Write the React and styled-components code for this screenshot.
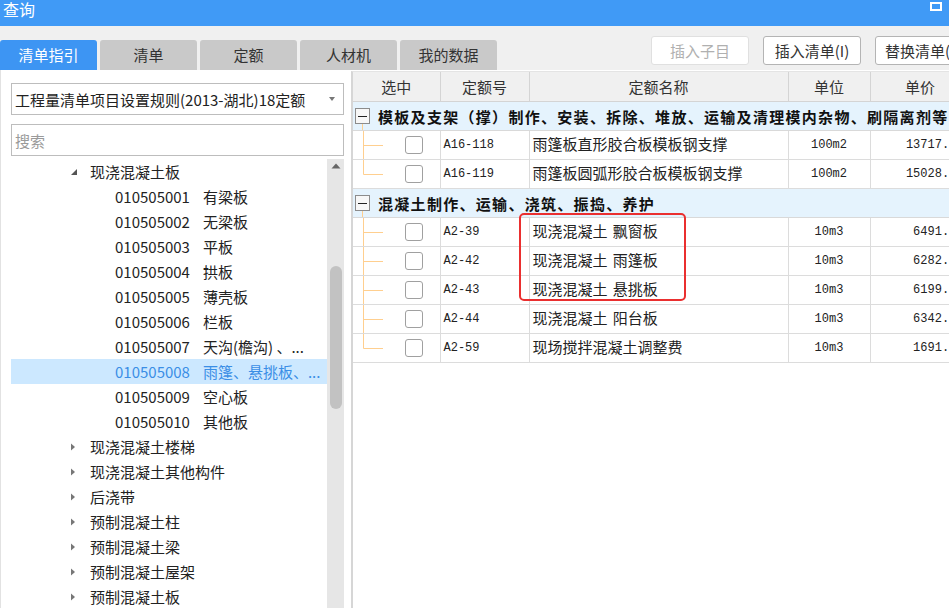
import React from "react";
import styled, { createGlobalStyle } from "styled-components";

const GlobalStyle = createGlobalStyle`
  html, body {
    margin: 0;
    padding: 0;
    background: #ffffff;
  }
  body {
    font-family: "Noto Sans CJK SC", "Noto Sans", sans-serif;
  }
`;

//data
const tabs = ["清单指引", "清单", "定额", "人材机", "我的数据"];

const tree = [
  { level: 1, label: "现浇混凝土板", open: true },
  { level: 2, code: "010505001", label: "有梁板" },
  { level: 2, code: "010505002", label: "无梁板" },
  { level: 2, code: "010505003", label: "平板" },
  { level: 2, code: "010505004", label: "拱板" },
  { level: 2, code: "010505005", label: "薄壳板" },
  { level: 2, code: "010505006", label: "栏板" },
  { level: 2, code: "010505007", label: "天沟(檐沟) 、..." },
  { level: 2, code: "010505008", label: "雨篷、悬挑板、...", selected: true },
  { level: 2, code: "010505009", label: "空心板" },
  { level: 2, code: "010505010", label: "其他板" },
  { level: 1, label: "现浇混凝土楼梯" },
  { level: 1, label: "现浇混凝土其他构件" },
  { level: 1, label: "后浇带" },
  { level: 1, label: "预制混凝土柱" },
  { level: 1, label: "预制混凝土梁" },
  { level: 1, label: "预制混凝土屋架" },
  { level: 1, label: "预制混凝土板" },
];

const groups = [
  {
    title: "模板及支架（撑）制作、安装、拆除、堆放、运输及清理模内杂物、刷隔离剂等",
    rows: [
      { code: "A16-118", name: "雨篷板直形胶合板模板钢支撑", unit: "100m2", price: "13717.06" },
      { code: "A16-119", name: "雨篷板圆弧形胶合板模板钢支撑", unit: "100m2", price: "15028.41" },
    ],
  },
  {
    title: "混凝土制作、运输、浇筑、振捣、养护",
    rows: [
      { code: "A2-39", name: "现浇混凝土 飘窗板", unit: "10m3", price: "6491.25" },
      { code: "A2-42", name: "现浇混凝土 雨篷板", unit: "10m3", price: "6282.13" },
      { code: "A2-43", name: "现浇混凝土 悬挑板", unit: "10m3", price: "6199.57" },
      { code: "A2-44", name: "现浇混凝土 阳台板", unit: "10m3", price: "6342.80" },
      { code: "A2-59", name: "现场搅拌混凝土调整费", unit: "10m3", price: "1691.60" },
    ],
  },
];

const App = () => {
  return (
    <>
      <GlobalStyle />
      <Window>
        <TitleBar>
          <Title>查询</Title>
          <MaxIcon />
        </TitleBar>
        <Toolbar>
          <Tabs>
            {tabs.map((t, i) => (
              <Tab key={t} $active={i === 0}>
                {t}
              </Tab>
            ))}
          </Tabs>
          <Buttons>
            <Button disabled>插入子目</Button>
            <Button>插入清单(I)</Button>
            <Button>替换清单(R)</Button>
          </Buttons>
        </Toolbar>
        <Body>
          <LeftPanel>
            <Select>
              <span>工程量清单项目设置规则(2013-湖北)18定额</span>
              <SelectArrow />
            </Select>
            <Search placeholder="搜索" />
            <TreeBox>
              <TreeList>
                {tree.map((item, i) => (
                  <TreeRow key={i} $level={item.level} $selected={item.selected}>
                    {item.level === 1 && (
                      <Caret>
                        {item.open ? (
                          <svg width="8" height="8" viewBox="0 0 8 8">
                            <path d="M7 1 L7 7 L1 7 Z" fill="#555" />
                          </svg>
                        ) : (
                          <svg width="6" height="8" viewBox="0 0 6 8">
                            <path d="M1 0.5 L5 4 L1 7.5 Z" fill="#777" />
                          </svg>
                        )}
                      </Caret>
                    )}
                    {item.code && <Code>{item.code}</Code>}
                    <Label>{item.label}</Label>
                  </TreeRow>
                ))}
              </TreeList>
              <ScrollTrack>
                <ScrollArrow>
                  <svg width="10" height="6" viewBox="0 0 10 6">
                    <path d="M0.5 5.5 L5 0.5 L9.5 5.5 Z" fill="#666" />
                  </svg>
                </ScrollArrow>
                <ScrollThumb />
              </ScrollTrack>
            </TreeBox>
          </LeftPanel>
          <RightPanel>
            <Grid>
              <Table>
                <colgroup>
                  <col style={{ width: 87 }} />
                  <col style={{ width: 89 }} />
                  <col style={{ width: 259 }} />
                  <col style={{ width: 82 }} />
                  <col style={{ width: 100 }} />
                </colgroup>
                <thead>
                  <tr>
                    <Th>选中</Th>
                    <Th>定额号</Th>
                    <Th>定额名称</Th>
                    <Th>单位</Th>
                    <Th>单价</Th>
                  </tr>
                </thead>
                <tbody>
                  {groups.map((g) => (
                    <React.Fragment key={g.title}>
                      <GroupRow>
                        <GroupCell colSpan={5}>
                          <GroupInner>
                            <MinusBox />
                            <GroupTitle>{g.title}</GroupTitle>
                          </GroupInner>
                        </GroupCell>
                      </GroupRow>
                      {g.rows.map((r, i) => (
                        <Row key={r.code}>
                          <PickCell>
                            <PickInner>
                              <svg width="40" height="29" viewBox="0 0 40 29">
                                <path
                                  d={
                                    i === g.rows.length - 1
                                      ? "M10.5 0 V14.5 H30"
                                      : "M10.5 0 V29 M10.5 14.5 H30"
                                  }
                                  stroke="#ffcf8f"
                                  strokeWidth="1"
                                  fill="none"
                                />
                              </svg>
                              <Checkbox />
                            </PickInner>
                          </PickCell>
                          <MonoCell>{r.code}</MonoCell>
                          <NameCell>{r.name}</NameCell>
                          <MonoCell $align="center">{r.unit}</MonoCell>
                          <MonoCell $align="right">{r.price}</MonoCell>
                        </Row>
                      ))}
                    </React.Fragment>
                  ))}
                </tbody>
              </Table>
              <Highlight />
            </Grid>
          </RightPanel>
        </Body>
      </Window>
    </>
  );
};

const Window = styled.div`
  width: 949px;
  height: 608px;
  overflow: hidden;
  display: flex;
  flex-direction: column;
  background: #f0f0f0;
`;

const TitleBar = styled.div`
  height: 26px;
  flex: none;
  background: #409af6;
  color: #ffffff;
  padding-left: 3px;
  display: flex;
  align-items: flex-start;
  justify-content: space-between;
`;

const Title = styled.span`
  font-size: 16px;
  line-height: 19px;
`;

const MaxIcon = styled.div`
  width: 8px;
  height: 5px;
  border: 2px solid #ffffff;
  margin: 2px 7px 0 0;
`;

const Toolbar = styled.div`
  height: 44px;
  flex: none;
  display: flex;
`;

const Tabs = styled.div`
  display: flex;
  align-self: flex-end;
  gap: 3px;
`;

const Tab = styled.div`
  width: 97px;
  height: 30px;
  border-radius: 3px 3px 0 0;
  background: ${(p) => (p.$active ? "#3d95f3" : "#c9c9c9")};
  color: ${(p) => (p.$active ? "#ffffff" : "#333333")};
  font-size: 15px;
  line-height: 30px;
  text-align: center;
`;

const Buttons = styled.div`
  display: flex;
  gap: 14px;
  margin: 10px 0 0 154px;
  flex: none;
`;

const Button = styled.button`
  width: 98px;
  height: 29px;
  padding: 0;
  background: #ffffff;
  border: 1px solid ${(p) => (p.disabled ? "#e0e0e0" : "#b4b4b4")};
  border-radius: 3px;
  font-family: "Noto Sans CJK SC", "Noto Sans", sans-serif;
  font-size: 15px;
  color: ${(p) => (p.disabled ? "#b0b0b0" : "#333333")};
  white-space: nowrap;
  overflow: hidden;
  text-align: center;
  &:last-child {
    text-align: left;
    padding-left: 9px;
  }
`;

const Body = styled.div`
  flex: 1;
  min-height: 0;
  display: flex;
  background: #ffffff;
`;

const LeftPanel = styled.div`
  width: 344px;
  flex: none;
  border-left: 1px solid #e2e2e2;
  padding: 13px 0 0 10px;
  box-sizing: border-box;
  display: flex;
  flex-direction: column;
`;

const Select = styled.div`
  width: 333px;
  height: 32px;
  box-sizing: border-box;
  border: 1px solid #bdbdbd;
  display: flex;
  align-items: center;
  justify-content: space-between;
  padding: 0 8px 0 3px;
  font-size: 15px;
  color: #222222;
`;

const SelectArrow = styled.div`
  width: 0;
  height: 0;
  border-left: 3.5px solid transparent;
  border-right: 3.5px solid transparent;
  border-top: 4px solid #777777;
`;

const Search = styled.input`
  width: 333px;
  height: 32px;
  box-sizing: border-box;
  margin-top: 9px;
  border: 1px solid #bdbdbd;
  padding: 0 3px;
  font-family: "Noto Sans CJK SC", "Noto Sans", sans-serif;
  font-size: 15px;
  outline: none;
  &::placeholder {
    color: #9a9a9a;
  }
`;

const TreeBox = styled.div`
  flex: 1;
  min-height: 0;
  margin-top: 3px;
  display: flex;
`;

const TreeList = styled.div`
  width: 316px;
  overflow: hidden;
`;

const TreeRow = styled.div`
  height: 25px;
  display: flex;
  align-items: center;
  padding-left: ${(p) => (p.$level === 1 ? 59 : 104)}px;
  padding-right: 4px;
  background: ${(p) => (p.$selected ? "#cce8ff" : "transparent")};
  color: ${(p) => (p.$selected ? "#3a8ee6" : "#222222")};
  font-size: 15px;
  white-space: nowrap;
  overflow: hidden;
`;

const Caret = styled.div`
  width: 20px;
  flex: none;
  display: flex;
  align-items: center;
`;

const Code = styled.span`
  flex: none;
  margin-right: 13px;
`;

const Label = styled.span`
  overflow: hidden;
  text-overflow: ellipsis;
`;

const ScrollTrack = styled.div`
  width: 17px;
  background: #e6e6e6;
  display: flex;
  flex-direction: column;
  align-items: center;
`;

const ScrollArrow = styled.div`
  margin-top: 4px;
  height: 8px;
  display: flex;
`;

const ScrollThumb = styled.div`
  width: 12px;
  height: 143px;
  margin-top: 95px;
  border-radius: 6px;
  background: #c2c2c2;
`;

const RightPanel = styled.div`
  flex: 1;
  min-width: 0;
  padding: 1px 0 0 7px;
`;

const Grid = styled.div`
  position: relative;
  height: 100%;
  border-left: 2px solid #d6d6d6;
  border-top: 1px solid #e4e4e4;
  overflow: hidden;
`;

const Table = styled.table`
  border-collapse: collapse;
  table-layout: fixed;
  width: 617px;
  font-size: 15px;
  color: #222222;
`;

const Th = styled.th`
  height: 29px;
  padding: 0;
  background: #f0f0f0;
  border: 1px solid #d4d4d4;
  border-top: none;
  font-weight: normal;
  color: #333333;
  text-align: center;
  &:first-child {
    border-left: none;
  }
`;

const GroupRow = styled.tr`
  height: 29px;
  background: #e5f3fd;
`;

const GroupCell = styled.td`
  padding: 0;
  border-bottom: 1px solid #d9d9d9;
  white-space: nowrap;
  overflow: hidden;
`;

const GroupInner = styled.div`
  display: flex;
  align-items: center;
  height: 28px;
  padding-left: 2px;
`;

const MinusBox = styled.div`
  position: relative;
  width: 13px;
  height: 14px;
  flex: none;
  border: 1px solid #8c8c8c;
  background: #f7f7f7;
  margin-right: 8px;
  &::before {
    content: "";
    position: absolute;
    left: 2px;
    right: 2px;
    top: 7px;
    height: 1px;
    background: #222222;
  }
  &::after {
    content: "";
    position: absolute;
    left: 6px;
    top: 15px;
    width: 1px;
    height: 7px;
    background: #ffcf8f;
  }
`;

const GroupTitle = styled.span`
  font-weight: bold;
  font-size: 15px;
  letter-spacing: 1.3px;
  color: #111111;
`;

const Row = styled.tr`
  height: 28.75px;
  background: #ffffff;
`;

const cellBorder = `
  border: 1px solid #dcdcdc;
  border-top: none;
`;

const PickCell = styled.td`
  padding: 0;
  ${cellBorder}
  border-left: none;
`;

const PickInner = styled.div`
  display: flex;
  align-items: center;
  height: 28px;
  overflow: hidden;
`;

const Checkbox = styled.div`
  width: 16px;
  height: 16px;
  margin-left: 12px;
  border: 1px solid #a0a0a0;
  border-radius: 3px;
  background: #ffffff;
`;

const MonoCell = styled.td`
  ${cellBorder}
  padding: 0 ${(p) => (p.$align === "right" ? 6 : 3)}px 0 3px;
  font-family: "Liberation Mono", "DejaVu Sans Mono", monospace;
  font-size: 12px;
  text-align: ${(p) => p.$align || "left"};
  white-space: nowrap;
  overflow: hidden;
`;

const NameCell = styled.td`
  ${cellBorder}
  padding: 0 3px 3px;
  white-space: nowrap;
  overflow: hidden;
  word-spacing: 2px;
`;

const Highlight = styled.div`
  position: absolute;
  left: 166px;
  top: 141px;
  width: 163px;
  height: 84px;
  border: 2.5px solid #ea2f2f;
  border-radius: 5px;
  pointer-events: none;
`;

export default App;
